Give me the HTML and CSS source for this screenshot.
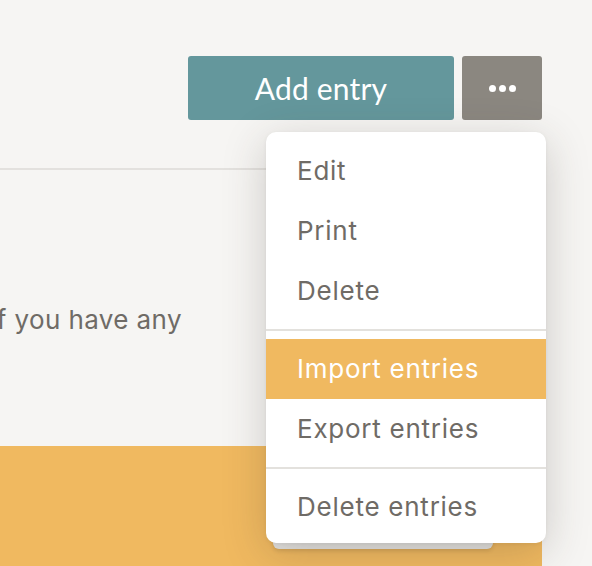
FILE: index.html
```html
<!DOCTYPE html>
<html lang="en">
<head>
<meta charset="utf-8">
<title>Entries</title>
<link rel="stylesheet" href="styles.css">
</head>
<body>
<div class="page">
  <header class="toolbar">
    <button class="btn btn-primary" type="button">Add entry</button>
    <button class="btn btn-more" type="button" aria-label="More">
      <span class="dot"></span><span class="dot"></span><span class="dot"></span>
    </button>
  </header>
  <hr class="rule">
  <section class="content">
    <p class="copy">if you have any</p>
  </section>
  <section class="panel">
    <button class="panel-btn" type="button"></button>
  </section>

  <ul class="menu">
    <li class="menu-item">Edit</li>
    <li class="menu-item">Print</li>
    <li class="menu-item">Delete</li>
    <li class="menu-sep"></li>
    <li class="menu-item active">Import entries</li>
    <li class="menu-item">Export entries</li>
    <li class="menu-sep"></li>
    <li class="menu-item">Delete entries</li>
  </ul>
</div>
</body>
</html>
```

FILE: styles.css
```css
* { box-sizing: border-box; }

html, body {
  margin: 0;
  padding: 0;
}

body {
  background: #f6f5f3;
  font-family: Inter, "Open Sans", sans-serif;
  color: #6f6b66;
  width: 592px;
  height: 566px;
  overflow: hidden;
}

.page {
  position: relative;
  width: 592px;
  height: 566px;
  overflow: hidden;
}

.toolbar {
  display: flex;
  justify-content: flex-end;
  gap: 8px;
  padding: 56px 50px 0 0;
}

.btn {
  height: 64px;
  border: 0;
  border-radius: 3px;
  color: #fff;
  cursor: pointer;
  padding: 0;
}

.btn-primary {
  width: 266px;
  background: #64979c;
  font-family: Lato, "Open Sans", sans-serif;
  font-size: 30px;
  line-height: 64px;
  letter-spacing: 0.2px;
}

.btn-more {
  width: 80px;
  background: #8b8780;
  display: flex;
  align-items: center;
  justify-content: center;
  gap: 3px;
}

.dot {
  width: 7px;
  height: 7px;
  border-radius: 50%;
  background: #fff;
}

.rule {
  margin: 48px 0 0 0;
  width: 542px;
  height: 2px;
  border: 0;
  background: #e3e1de;
}

.content {
  padding-top: 132px;
  height: 276px;
}

.copy {
  margin: 0;
  font-size: 26px;
  line-height: 36px;
  text-indent: -10px;
  letter-spacing: 0.4px;
  white-space: nowrap;
}

.panel {
  width: 542px;
  height: 120px;
  background: #f0b960;
  padding: 55px 0 0 273px;
}

.panel-btn {
  display: block;
  width: 220px;
  height: 48px;
  border: 0;
  border-radius: 6px;
  background: #e3e2e0;
  box-shadow: 0 2px 4px rgba(0, 0, 0, 0.12);
}

.menu {
  position: absolute;
  top: 132px;
  left: 266px;
  width: 280px;
  margin: 0;
  padding: 9px 0 6px;
  list-style: none;
  background: #fff;
  border-radius: 10px;
  box-shadow: 0 10px 44px rgba(60, 50, 40, 0.22), 0 1px 4px rgba(0, 0, 0, 0.06);
}

.menu-item {
  height: 60px;
  padding-left: 31px;
  font-size: 26px;
  line-height: 60px;
  color: #6f6b66;
  letter-spacing: 0.75px;
}

.menu-item.active {
  background: #f0b960;
  color: #fff;
}

.menu-sep {
  height: 2px;
  margin: 8px 0;
  background: #e3e1dd;
}
```
